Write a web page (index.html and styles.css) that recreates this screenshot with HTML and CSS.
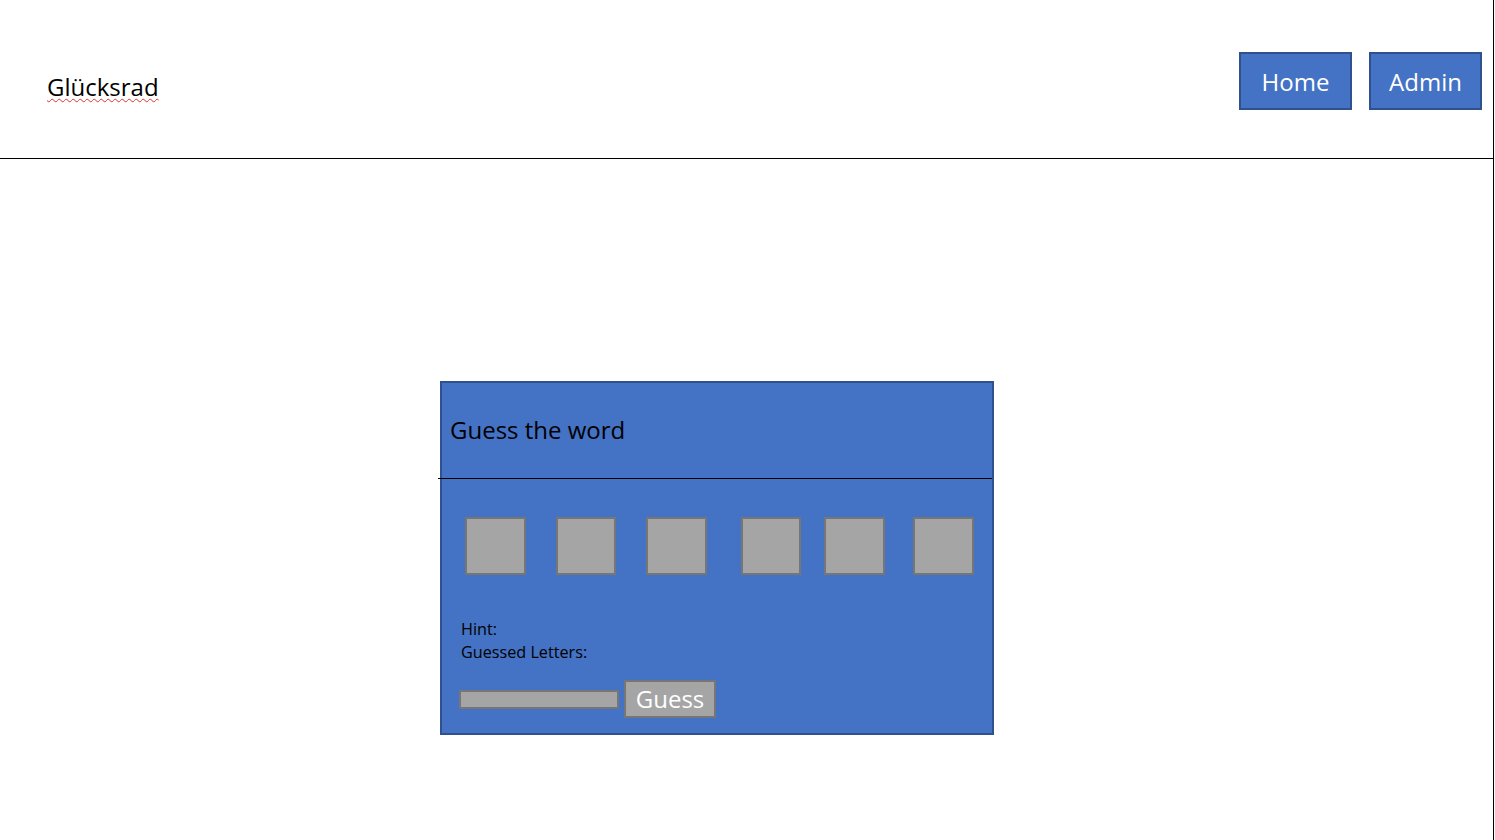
FILE: index.html
```html
<!DOCTYPE html>
<html lang="de">
<head>
<meta charset="utf-8">
<title>Glücksrad</title>
<link rel="stylesheet" href="styles.css">
</head>
<body>
<div class="page">
  <header class="topbar">
    <div class="brand">Glücksrad</div>
    <nav class="nav">
      <a class="nav-btn" href="#">Home</a>
      <a class="nav-btn" href="#">Admin</a>
    </nav>
  </header>
  <main class="main">
    <section class="panel">
      <div class="panel-head">Guess the word</div>
      <div class="panel-body">
        <div class="tiles">
          <div class="tile"></div>
          <div class="tile"></div>
          <div class="tile"></div>
          <div class="tile"></div>
          <div class="tile"></div>
          <div class="tile"></div>
        </div>
        <div class="info">
          <div>Hint:</div>
          <div>Guessed Letters:</div>
        </div>
        <form class="guess-row">
          <input class="guess-input" type="text">
          <button class="guess-btn" type="button">Guess</button>
        </form>
      </div>
    </section>
  </main>
</div>
</body>
</html>
```
FILE: styles.css
```css
* { box-sizing: border-box; }
html, body { margin: 0; padding: 0; background: #fff; }
body {
  font-family: "Open Sans", Lato, sans-serif;
  color: #000;
}
.page {
  width: 1494px;
  min-height: 840px;
  border-right: 1px solid #000;
}
.topbar {
  height: 159px;
  border-bottom: 1px solid #000;
  display: flex;
  justify-content: space-between;
  align-items: flex-start;
}
.brand {
  margin: 70px 0 0 47px;
  font-size: 24px;
  line-height: 34px;
  text-decoration: underline wavy #e03030;
  text-decoration-thickness: 1px;
  text-underline-offset: 2px;
}
.nav {
  display: flex;
  gap: 17px;
  margin: 52px 11px 0 0;
}
.nav-btn {
  width: 113px;
  height: 58px;
  background: #4472c4;
  border: 2px solid #2f528f;
  color: #fff;
  font-size: 24px;
  text-decoration: none;
  display: flex;
  align-items: center;
  justify-content: center;
}
.main {
  padding: 222px 0 0 440px;
}
.panel {
  width: 554px;
  height: 354px;
  background: #4472c4;
  border: 2px solid #2f528f;
}
.panel-head {
  height: 96px;
  margin-left: -4px;
  padding-left: 12px;
  border-bottom: 1px solid #000;
  display: flex;
  align-items: center;
  font-size: 24px;
  padding-bottom: 2px;
}
.panel-body {
  padding: 38px 0 0 23px;
}
.tiles {
  display: flex;
}
.tile {
  width: 61px;
  height: 58px;
  background: #a5a5a5;
  border: 2px solid #767676;
}
.tile:nth-child(2) { margin-left: 30px; width: 60px; }
.tile:nth-child(3) { margin-left: 30px; }
.tile:nth-child(4) { margin-left: 34px; width: 60px; }
.tile:nth-child(5) { margin-left: 23px; }
.tile:nth-child(6) { margin-left: 28px; }
.info {
  margin-top: 43px;
  margin-left: -4px;
  font-size: 16.2px;
  line-height: 23px;
}
.guess-row {
  margin: 16px 0 0 -6px;
  display: flex;
  align-items: center;
  gap: 5px;
}
.guess-input {
  width: 160px;
  height: 19px;
  margin: 0;
  padding: 0;
  background: #a5a5a5;
  border: 2px solid #767676;
}
.guess-btn {
  width: 92px;
  height: 38px;
  margin: 0;
  padding: 0 0 2px;
  background: #a5a5a5;
  border: 2px solid #767676;
  color: #fff;
  font-family: inherit;
  font-size: 24px;
}
```
